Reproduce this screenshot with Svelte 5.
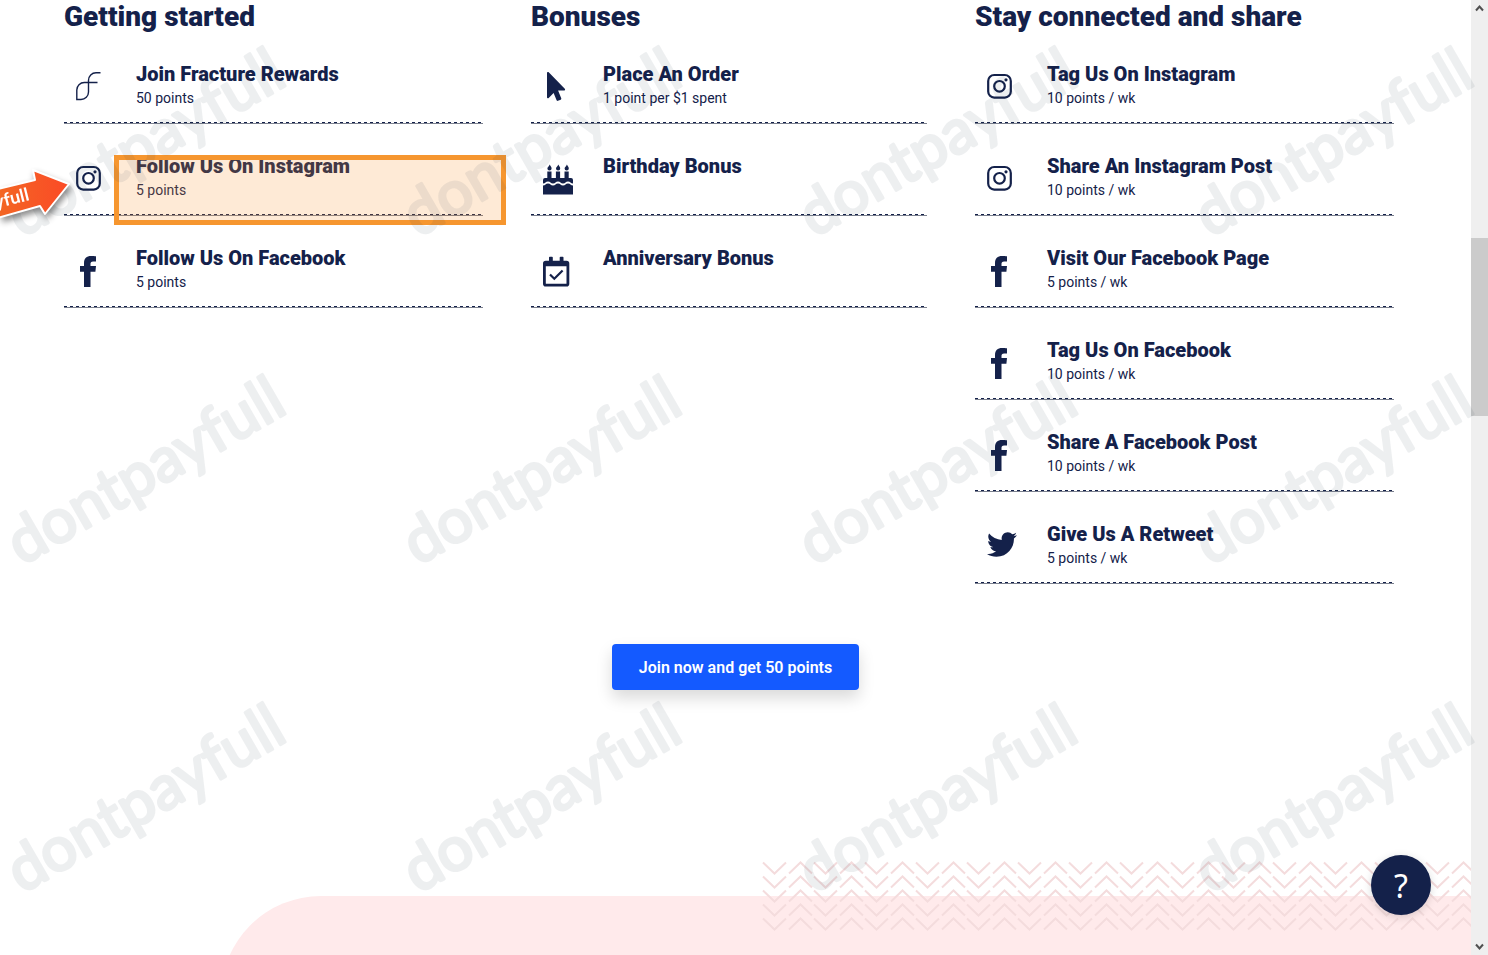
<script lang="ts">
  type IconName = 'fracture' | 'instagram' | 'facebook' | 'cursor' | 'cake' | 'calendar' | 'twitter';

  interface Reward {
    icon: IconName;
    title: string;
    points?: string;
    highlighted?: boolean;
  }

  interface RewardGroup {
    heading: string;
    rewards: Reward[];
  }

  const groups: RewardGroup[] = [
    {
      heading: 'Getting started',
      rewards: [
        { icon: 'fracture', title: 'Join Fracture Rewards', points: '50 points' },
        { icon: 'instagram', title: 'Follow Us On Instagram', points: '5 points', highlighted: true },
        { icon: 'facebook', title: 'Follow Us On Facebook', points: '5 points' }
      ]
    },
    {
      heading: 'Bonuses',
      rewards: [
        { icon: 'cursor', title: 'Place An Order', points: '1 point per $1 spent' },
        { icon: 'cake', title: 'Birthday Bonus' },
        { icon: 'calendar', title: 'Anniversary Bonus' }
      ]
    },
    {
      heading: 'Stay connected and share',
      rewards: [
        { icon: 'instagram', title: 'Tag Us On Instagram', points: '10 points / wk' },
        { icon: 'instagram', title: 'Share An Instagram Post', points: '10 points / wk' },
        { icon: 'facebook', title: 'Visit Our Facebook Page', points: '5 points / wk' },
        { icon: 'facebook', title: 'Tag Us On Facebook', points: '10 points / wk' },
        { icon: 'facebook', title: 'Share A Facebook Post', points: '10 points / wk' },
        { icon: 'twitter', title: 'Give Us A Retweet', points: '5 points / wk' }
      ]
    }
  ];

  // Watermark tiles repeat every 396 x 328
  const watermarks = [0, 1, 2].flatMap((row) =>
    [0, 1, 2, 3].map((col) => ({ x: 22 + col * 396, y: 238 + row * 328 }))
  );
</script>

{#snippet rewardIcon(name: IconName)}
  <svg class="icon" viewBox="0 0 32 32" aria-hidden="true">
    {#if name === 'fracture'}
      <path class="line" d="M24.5 .7H20a7.5 7.5 0 0 0-7.500 7.500V20a7.500 7.500 0 0 1-7.500 7.500H.8V18a7.500 7.500 0 0 1 7.500-7.500H21.500" />
    {:else if name === 'instagram'}
      <rect class="thick" x="1.200" y="3" width="22.600" height="22.600" rx="6" />
      <circle class="thick" cx="12.500" cy="14.300" r="5.300" />
      <circle cx="19" cy="7.800" r="1.600" />
    {:else if name === 'facebook'}
      <path d="M8 31V15.800H4V9.900h4V7.200C8 2.500 10.600 0 15 0c2 0 3.800.1 5 .3v5.200h-2.900c-2 0-2.600 1-2.600 2.600v1.800H20l-.6 5.900h-4.900V31z" />
    {:else if name === 'cursor'}
      <path
        transform="translate(4 0) scale(.0565)"
        d="M302.189 329.126H196.105l55.831 135.993c3.889 9.428-.555 19.999-9.444 23.999l-49.165 21.427c-9.165 4-19.443-.571-23.332-9.714l-53.053-129.136-86.664 89.138C18.729 472.71 0 463.554 0 447.977V18.299C0 1.899 19.921-6.096 30.277 5.443l284.412 292.542c11.472 11.179 3.007 31.141-12.5 31.141z"
      />
    {:else if name === 'cake'}
      <path d="M4.300 14V7.600h4.200V14h4.400V7.600h4.200V14h4.400V7.600h4.200V14H28a2 2 0 0 1 2 2v3.500c-2.500 0-2.500-2-5-2s-2.500 2-5 2-2.500-2-5-2-2.500 2-5 2-2.500-2-5-2-2.500 2-5 2V16a2 2 0 0 1 2-2z" />
      <path d="M0 21.500c2.500 0 2.500-2 5-2s2.500 2 5 2 2.500-2 5-2 2.500 2 5 2 2.500-2 5-2 2.500 2 5 2V30.500H0z" />
      <path d="M6.700 .5c.6 1.500 1.900 2.400 1.900 3.900a2.100 2.100 0 0 1-4.200 0c0-1.500 1.700-1.700 2.300-3.900zM15.300 .5c.6 1.500 1.900 2.400 1.900 3.900a2.100 2.100 0 0 1-4.200 0c0-1.500 1.700-1.700 2.300-3.900zM23.900 .5c.6 1.500 1.900 2.400 1.900 3.900a2.100 2.100 0 0 1-4.200 0c0-1.500 1.700-1.700 2.300-3.900z" />
    {:else if name === 'calendar'}
      <path
        fill-rule="evenodd"
        d="M6 1.500q0-.8.800-.8h2.200q.8 0 .8.800v3.200h6.900V1.500q0-.8.800-.8h2.200q.8 0 .8.800v3.200h3q2.800 0 2.800 2.800v20.200q0 2.800-2.800 2.800H2.800Q0 30.500 0 27.700V7.500q0-2.800 2.800-2.800H6zM2.800 10.300v17.100q0 .4.400.4h19.900q.4 0 .4-.4V10.300z"
      />
      <path class="thick" d="M7 18.500l4.300 4.300 8.300-8.300" />
    {:else}
      <path
        transform="translate(0 -2.500) scale(.0586)"
        d="M459.370 151.716c.325 4.548.325 9.097.325 13.645 0 138.720-105.583 298.558-298.558 298.558-59.452 0-114.680-17.219-161.137-47.106 8.447.974 16.568 1.299 25.340 1.299 49.055 0 94.213-16.568 130.274-44.832-46.132-.975-84.792-31.188-98.112-72.772 6.498.974 12.995 1.624 19.818 1.624 9.421 0 18.843-1.300 27.614-3.573-48.081-9.747-84.143-51.980-84.143-102.985v-1.299c13.969 7.797 30.214 12.670 47.431 13.319-28.264-18.843-46.781-51.005-46.781-87.391 0-19.492 5.197-37.360 14.294-52.954 51.655 63.675 129.300 105.258 216.365 109.807-1.624-7.797-2.599-15.918-2.599-24.040 0-57.828 46.782-104.934 104.934-104.934 30.213 0 57.502 12.670 76.670 33.137 23.715-4.548 46.456-13.320 66.599-25.340-7.798 24.366-24.366 44.833-46.132 57.827 21.117-2.273 41.584-8.122 60.426-16.243-14.292 20.791-32.161 39.308-52.628 54.253z"
      />
    {/if}
  </svg>
{/snippet}

<div class="page">
  <main class="content">
    <div class="groups">
      {#each groups as group (group.heading)}
        <section class="group">
          <h2>{group.heading}</h2>
          <ul>
            {#each group.rewards as reward (reward.title)}
              <li class="reward">
                {@render rewardIcon(reward.icon)}
                <div class="reward-text">
                  <h3>{reward.title}</h3>
                  {#if reward.points}
                    <p>{reward.points}</p>
                  {/if}
                </div>
                {#if reward.highlighted}
                  <div class="highlight"></div>
                {/if}
              </li>
            {/each}
          </ul>
        </section>
      {/each}
    </div>

    <button type="button" class="join">Join now and get 50 points</button>

    <div class="banner">
      <div class="banner-clip">
        <div class="banner-shape"></div>
      </div>
      <svg class="chevrons" aria-hidden="true">
        <defs>
          <pattern id="zigzag" width="51" height="14" patternUnits="userSpaceOnUse">
            <path d="M1 1.500l11.500 11 11.500-11M27 12.500l11.500-11 11.500 11" />
          </pattern>
        </defs>
        <rect width="100%" height="70" fill="url(#zigzag)" />
      </svg>
    </div>
  </main>

  <div class="scrollbar" aria-hidden="true">
    <svg viewBox="0 0 17 17"><path d="M5 10.500l3.500-4 3.500 4" /></svg>
    <div class="track"><div class="thumb"></div></div>
    <svg viewBox="0 0 17 17"><path d="M5 6.500l3.500 4 3.500-4" /></svg>
  </div>

  <svg class="watermark" aria-hidden="true">
    {#each watermarks as mark}
      <text transform="translate({mark.x} {mark.y}) rotate(-30)">dontpayfull</text>
    {/each}
  </svg>

  <svg class="pointer" viewBox="0 0 90 80" aria-hidden="true">
    <defs>
      <linearGradient id="arrow-fill" x1="0" y1="0" x2="1" y2="0">
        <stop offset="0" stop-color="#f26a24" />
        <stop offset="1" stop-color="#fb4a26" />
      </linearGradient>
    </defs>
    <path d="M-10 41L35 30 33 20 69 34 45 64 40 56-10 70z" />
    <text transform="translate(30 50) rotate(-14)" text-anchor="end">dontpayfull</text>
  </svg>

  <button type="button" class="help" aria-label="Help">?</button>
</div>

<style>
  :global(body) {
    margin: 0;
    background: #fff;
  }

  .page {
    position: relative;
    display: flex;
    min-height: 100vh;
    overflow: hidden;
    color: #14214a;
    font-family: Roboto, 'Noto Sans', sans-serif;
  }

  .content {
    display: flex;
    flex: 1;
    flex-direction: column;
    align-items: center;
    min-width: 0;
  }

  .groups {
    display: grid;
    grid-template-columns: 419fr 396fr 419fr;
    gap: 48px;
    width: 100%;
    padding: 0 77px 0 64px;
    box-sizing: border-box;
  }

  h2 {
    margin: 0;
    font-size: 28px;
    font-weight: 900;
    line-height: 34px;
    white-space: nowrap;
  }

  ul {
    list-style: none;
    margin: 0;
    padding: 0;
  }

  .reward {
    position: relative;
    display: flex;
    gap: 28px;
    height: 92px;
    padding: 30px 12px 12px;
    box-sizing: border-box;
    border-bottom: 1px solid #7b808e;
    background: repeating-linear-gradient(90deg, #14214a 0 3px, transparent 3px 6px) bottom / 100% 1px no-repeat;
  }

  .reward:first-child {
    height: 90px;
    padding-top: 28px;
  }

  .icon {
    flex: none;
    width: 32px;
    height: 32px;
    margin-top: 10px;
    fill: #14214a;
  }

  .icon .line,
  .icon .thick {
    fill: none;
    stroke: #14214a;
    stroke-width: 1.4;
  }

  .icon .thick {
    stroke-width: 2.2;
  }

  h3 {
    margin: 0;
    font-size: 20px;
    font-weight: 900;
    line-height: 24px;
    white-space: nowrap;
  }

  p {
    margin: 0;
    font-size: 14px;
    line-height: 24px;
  }

  .highlight {
    position: absolute;
    top: 31px;
    right: -23px;
    left: 50px;
    height: 70px;
    box-sizing: border-box;
    border: 5px solid #f6962f;
    background: rgba(250, 150, 50, 0.2);
  }

  .join {
    height: 46px;
    margin-top: 60px;
    padding: 0 27px;
    border: 0;
    border-radius: 4px;
    background: #145aff;
    box-shadow: 0 8px 16px rgba(0, 0, 0, 0.15);
    color: #fff;
    font-family: Roboto, sans-serif;
    font-size: 16px;
    font-weight: 600;
    cursor: pointer;
  }

  .banner {
    position: relative;
    flex: 1;
    width: 100%;
    min-height: 59px;
    margin-top: 206px;
  }

  .banner-clip {
    position: absolute;
    inset: 0;
    overflow: hidden;
  }

  .banner-shape {
    width: 85%;
    height: 200px;
    margin-left: auto;
    border-top-left-radius: 100px;
    background: #ffeaeb;
  }

  .chevrons {
    position: absolute;
    top: -35px;
    right: 0;
    width: 709px;
    height: 70px;
  }

  .chevrons path {
    fill: none;
    stroke: #f4dcdd;
    stroke-width: 2;
  }

  .scrollbar {
    display: flex;
    flex: none;
    flex-direction: column;
    width: 17px;
    height: 100vh;
    background: #efefef;
  }

  .scrollbar svg {
    width: 17px;
    height: 17px;
    fill: none;
    stroke: #505050;
    stroke-width: 2;
  }

  .track {
    flex: 1;
  }

  .thumb {
    height: 178px;
    margin-top: 221px;
    background: #cbcbcb;
  }

  .watermark {
    position: absolute;
    inset: 0;
    width: 100%;
    height: 100%;
    opacity: 0.08;
    pointer-events: none;
  }

  .watermark text {
    fill: #2b3f50;
    stroke: #2b3f50;
    stroke-width: 3;
    stroke-linejoin: round;
    font-family: Lato, sans-serif;
    font-size: 62px;
  }

  .pointer {
    position: absolute;
    top: 150px;
    left: 0;
    width: 90px;
    height: 80px;
    filter: drop-shadow(2px 4px 3px rgba(0, 0, 0, 0.45));
    pointer-events: none;
  }

  .pointer path {
    fill: url(#arrow-fill);
    stroke: #fff;
    stroke-width: 2;
    stroke-linejoin: round;
  }

  .pointer text {
    fill: #fff;
    font-family: Lato, sans-serif;
    font-size: 18px;
    font-weight: 700;
  }

  .help {
    position: absolute;
    right: 57px;
    bottom: 40px;
    width: 60px;
    height: 60px;
    padding: 0;
    border: 0;
    border-radius: 50%;
    background: #14214a;
    box-shadow: 0 2px 8px rgba(0, 0, 0, 0.15);
    color: #fff;
    font-family: 'Noto Sans', sans-serif;
    font-size: 32px;
    font-weight: 400;
    cursor: pointer;
  }
</style>
